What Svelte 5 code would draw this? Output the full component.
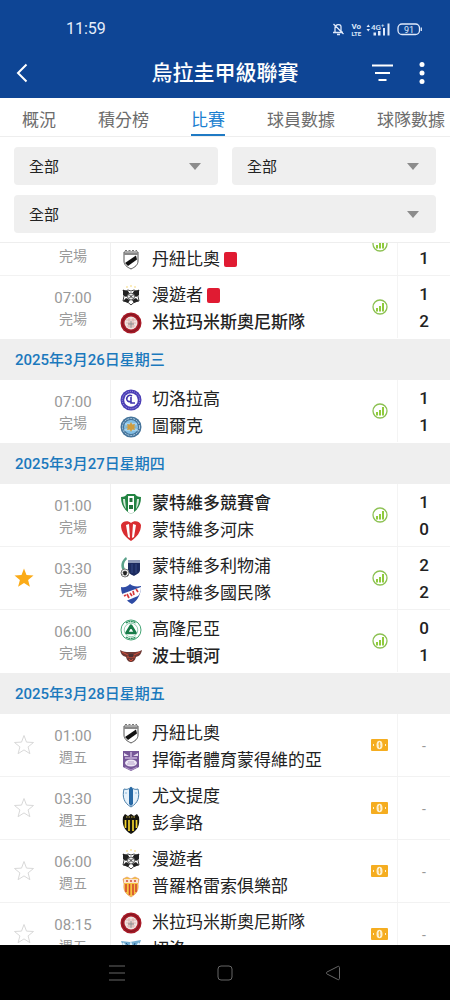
<script lang="ts">
  import { onMount } from 'svelte';

  type Team = { crest: string; name: string; score?: number; bold?: boolean; redCard?: boolean };
  type Match = { time: string; note: string; star: 'none' | 'off' | 'on'; teams: (Team | null)[] };
  type Day = { date: string; matches: Match[] };

  const tabs = ['概況', '積分榜', '比賽', '球員數據', '球隊數據'];
  const filters = ['stage', 'round', 'team'];

  let active = $state('比賽');
  let list: HTMLElement;

  let days = $state<Day[]>([
    {
      date: '',
      matches: [
        { time: '', note: '完場', star: 'none', teams: [null, { crest: 'danubio', name: '丹紐比奧', score: 1, redCard: true }] },
        {
          time: '07:00', note: '完場', star: 'none',
          teams: [
            { crest: 'wanderers', name: '漫遊者', score: 1, redCard: true },
            { crest: 'miramar', name: '米拉玛米斯奧尼斯隊', score: 2, bold: true }
          ]
        }
      ]
    },
    {
      date: '2025年3月26日星期三',
      matches: [
        {
          time: '07:00', note: '完場', star: 'none',
          teams: [
            { crest: 'cerrolargo', name: '切洛拉高', score: 1 },
            { crest: 'torque', name: '圖爾克', score: 1 }
          ]
        }
      ]
    },
    {
      date: '2025年3月27日星期四',
      matches: [
        {
          time: '01:00', note: '完場', star: 'none',
          teams: [
            { crest: 'racing', name: '蒙特維多競賽會', score: 1, bold: true },
            { crest: 'river', name: '蒙特維多河床', score: 0 }
          ]
        },
        {
          time: '03:30', note: '完場', star: 'on',
          teams: [
            { crest: 'liverpool', name: '蒙特維多利物浦', score: 2 },
            { crest: 'nacional', name: '蒙特維多國民隊', score: 2 }
          ]
        },
        {
          time: '06:00', note: '完場', star: 'none',
          teams: [
            { crest: 'colonia', name: '高隆尼亞', score: 0 },
            { crest: 'boston', name: '波士頓河', score: 1, bold: true }
          ]
        }
      ]
    },
    {
      date: '2025年3月28日星期五',
      matches: [
        {
          time: '01:00', note: '週五', star: 'off',
          teams: [
            { crest: 'danubio', name: '丹紐比奧' },
            { crest: 'defensor', name: '捍衛者體育蒙得維的亞' }
          ]
        },
        {
          time: '03:30', note: '週五', star: 'off',
          teams: [
            { crest: 'juventud', name: '尤文提度' },
            { crest: 'penarol', name: '彭拿路' }
          ]
        },
        {
          time: '06:00', note: '週五', star: 'off',
          teams: [
            { crest: 'wanderers', name: '漫遊者' },
            { crest: 'progreso', name: '普羅格雷索俱樂部' }
          ]
        },
        {
          time: '08:15', note: '週五', star: 'off',
          teams: [
            { crest: 'miramar', name: '米拉玛米斯奧尼斯隊' },
            { crest: 'cerro', name: '切洛' }
          ]
        }
      ]
    }
  ]);

  const finished = (match: Match) => match.note === '完場';

  function toggleStar(match: Match) {
    match.star = match.star === 'on' ? 'off' : 'on';
  }

  onMount(() => {
    list.scrollTop = 30;
  });
</script>

{#snippet crest(kind: string)}
  <svg class="crest" viewBox="0 0 22 22" aria-hidden="true">
    {#if kind === 'danubio'}
      <path d="M4 3v9c0 4 3 6 7 8 4-2 7-4 7-8V3z" fill="#fff" stroke="#555" />
      <path d="M4 4h14v2H4z" fill="#888" />
      <path d="M5 1.500h12" stroke="#777" stroke-dasharray="2 1.500" />
      <path d="m5 14 11-7.500 1 4L8 17z" fill="#111" />
    {:else if kind === 'wanderers'}
      <path d="M3 5c2 1 3 1 5 0l3 1 3-1c2 1 3 1 5 0-1 3-2 4-1 6l1 5c-3 0-5 1-8 4-3-3-5-4-8-4l1-5c1-2 0-3-1-6z" fill="#fff" stroke="#444" />
      <path d="m3 5 5 1 2 3-4 3-3-2zM19 5l-5 1-2 3 4 3 3-2zM3 16l3-3 4 2-2 3zM19 16l-3-3-4 2 2 3z" fill="#222" />
      <circle cx="11" cy="11.500" r="3.500" fill="#eee" stroke="#555" />
      <path d="m9 9.500 4 4m0-4-4 4" stroke="#333" />
      <circle cx="7" cy="2" r=".7" fill="#f2c94c" /><circle cx="11" cy="1" r=".7" fill="#f2c94c" /><circle cx="15" cy="2" r=".7" fill="#f2c94c" />
    {:else if kind === 'miramar'}
      <circle cx="11" cy="11" r="10.500" fill="#a81b28" />
      <circle cx="11" cy="11" r="8.500" fill="none" stroke="#7c1520" />
      <circle cx="11" cy="11" r="6.500" fill="#efe3e0" />
      <path d="M6 8h10M6 11h10M7 14h8M9 6v10M13 6v10" stroke="#d4a5a1" stroke-width=".7" />
      <path d="M11 9v7M8 12h6" stroke="#888" />
    {:else if kind === 'cerrolargo'}
      <circle cx="11" cy="11" r="10.500" fill="#4a3db5" />
      <circle cx="11" cy="11" r="8.700" fill="none" stroke="#aaa3e6" stroke-dasharray="1 1.200" />
      <circle cx="11" cy="11" r="6.800" fill="#fff" />
      <path d="M12 7c-3-2-6 1-5 4 1 2 3 2 4 1M11 8v6h4" fill="none" stroke="#4035ad" stroke-width="1.600" />
    {:else if kind === 'torque'}
      <circle cx="11" cy="11" r="10.500" fill="#45749b" />
      <circle cx="11" cy="11" r="8.500" fill="none" stroke="#b6d4e8" stroke-dasharray="2 1" />
      <circle cx="11" cy="11" r="7" fill="#83bfe5" />
      <path d="M5 8h12M4 14h14" stroke="#c6e3f4" />
      <path d="m11 6 1.300 2.600L15 8l-.8 2.400L17 11l-2.800.8L15 14l-2.700-.6L11 16l-1.300-2.600L7 14l.8-2.200L5 11l2.800-.6L7 8l2.700.6z" fill="#cf9c3d" />
    {:else if kind === 'racing'}
      <path d="M1 4c3 0 5-1 6-3h8c1 2 3 3 6 3 0 8-3 13-10 17C4 17 1 12 1 4z" fill="#238443" />
      <path d="M3 6h2l1 10C4 13 3 10 3 6zM19 6h-2l-1 10c2-3 3-6 3-10z" fill="#d6eadb" />
      <path d="M8 3h6v16l-3 2-3-2z" fill="#fff" />
      <path d="M9.500 5h3v4h-3zM9 12h4v4H9z" fill="#23743d" />
    {:else if kind === 'river'}
      <path d="M1 5c1-4 7-5 10-2 3-3 9-2 10 2 0 7-4 12-10 16C5 17 1 12 1 5z" fill="#d92d31" />
      <path d="m6 5 3-1 1 14-2-1zM16 5l-3-1-1 14 2-1z" fill="#fff" />
    {:else if kind === 'liverpool'}
      <path d="M6 1C1 5 0 10 3 15l2-2C3 9 4 6 7 3z" fill="#5aa18a" />
      <path d="M8 4h12v10c0 3-3 4-6 6-4-2-6-3-6-6z" fill="#1c2b5f" />
      <path d="M8 4h12v3H8z" fill="#8f9bb8" />
      <path d="M12 8v9M16 8v9" stroke="#344a86" />
      <circle cx="5" cy="17" r="4" fill="#eee" stroke="#777" />
      <path d="m5 15 2 1-1 3H4l-1-3zM1.500 18l1 1M8 19l-1 1" fill="#222" stroke="#222" stroke-width=".6" />
    {:else if kind === 'nacional'}
      <path d="M1 4c4 1 7-1 9-3 2 2 6 3 11 2 0 8-3 14-9 18C5 17 1 12 1 4z" fill="#2e4ba4" />
      <path d="m2 11 19-7c0 4-1 7-3 9L6 18c-2-2-3-4-4-7z" fill="#fff" />
      <path d="m4 13 2-1m1-1 2 4m1-5 2 3m1-5 1 4m2-6 2 3" stroke="#d5393d" stroke-width="1.700" />
    {:else if kind === 'colonia'}
      <circle cx="11" cy="11" r="10" fill="#fff" stroke="#45a575" />
      <path d="M6 4c3-2 7-2 10 0M6 18c3 2 7 2 10 0" fill="none" stroke="#2c9460" stroke-width="1.500" stroke-dasharray="2 .5" />
      <circle cx="11" cy="11" r="6.800" fill="none" stroke="#6cba92" stroke-width=".7" />
      <path d="M11 6.500 15.500 14h-9z" fill="none" stroke="#187b48" stroke-width="2.600" stroke-linejoin="round" />
    {:else if kind === 'boston'}
      <path d="M0 4c4 2 6 2 9 2h4c3 0 5 0 9-2-1 5-3 6-6 7-1 4-3 5-5 5s-4-1-5-5C3 10 1 9 0 4z" fill="#6f3a35" />
      <path d="m2 6 6 3M20 6l-6 3M7 11h8M9 13l2 2 2-2" stroke="#d34d39" fill="none" />
      <path d="M9 8h4v3H9z" fill="#493234" />
    {:else if kind === 'defensor'}
      <path d="M3 1h16v16l-8 4-8-4z" fill="#765798" />
      <path d="m4 3 5 3H4zM18 3l-5 3h5z" fill="#e8dff0" />
      <path d="M11 2v5M5 8h12" stroke="#c8b3da" stroke-width="1.500" />
      <ellipse cx="11" cy="13" rx="6" ry="3.500" fill="#eee8f5" />
      <path d="M7 14h8M8 12h6" stroke="#b9a4cd" />
      <path d="m5 17 6 3 6-3" fill="none" stroke="#b69aca" />
    {:else if kind === 'juventud'}
      <path d="M4 3c3 1 5 0 7-2 2 2 4 3 7 2 2 8 0 14-7 18C4 17 2 11 4 3z" fill="#e6f1fa" stroke="#477da9" />
      <path d="m9 3 2-2 2 2v15l-2 2-2-2z" fill="#2769a5" />
      <path d="M5 7h2M15 7h2" stroke="#8ab8dc" />
    {:else if kind === 'penarol'}
      <path d="m3 4 2-3 3 2 3-2 3 2 3-2 2 3c1 8-1 13-8 17C4 17 2 12 3 4z" fill="#16150f" />
      <path d="M5.500 7v8M9 7v11M13 7v11M16.500 7v8" stroke="#f1d22d" stroke-width="1.700" />
      <path d="M6 4h10" stroke="#cbb443" stroke-dasharray="1.500 1" />
    {:else if kind === 'progreso'}
      <path d="M3 3 7 1l4 2 4-2 4 2-1 5c1 7-2 10-7 13C6 18 3 15 4 8z" fill="#f6c441" stroke="#e08a5a" stroke-width=".6" />
      <path d="M4 3h14v4H4z" fill="#fbe3cf" />
      <path d="M6 5h2m2 0h2m2 0h2" stroke="#d34b36" stroke-width="1.500" />
      <path d="M6 8v8M9.500 8v11M13 8v11M16 8v8" stroke="#d1402e" stroke-width="1.500" />
    {:else}
      <path d="m1 2 9 1 11-2-3 8c-1 5-3 9-7 12-4-3-6-7-7-11z" fill="#72aed3" />
      <path d="m3 4 6 9 2-8 3 8 5-9" fill="none" stroke="#e4f2fa" stroke-width="2" />
      <path d="m6 4 4 5M15 4l-2 5M8 16h6" stroke="#285d91" />
    {/if}
  </svg>
{/snippet}

<div class="screen">
  <header>
    <div class="status-bar">
      <span class="clock">11:59</span>
      <svg class="status-icons" viewBox="0 0 90 16" aria-hidden="true">
        <g fill="none" stroke="#dfe9fa" stroke-width="1.300">
          <path d="M1 11.500h10M3 11V7c0-4 5.500-4.500 6-1.500v4.500l1.500 1.500M5 13.500h3M1.500 3l10 10" />
          <rect x="66" y="3" width="21.500" height="10.500" rx="4" />
          <path d="M89.300 6.500v3.500" />
        </g>
        <g fill="#dfe9fa">
          <text x="19.500" y="8" font-size="8" font-weight="700">Vo</text>
          <text x="19.500" y="14.500" font-size="6" font-weight="700">LTE</text>
          <path d="M34.500 6h3.500l-1.700-2.500zM34.500 8h3.500l-1.700 2.500z" />
          <text x="39" y="8.500" font-size="8" font-weight="500">4G⁺</text>
          <path d="M41.500 11.500h2.500v3h-2.500zM46 10h2.500v4.500H46zM51 7h2v7.500h-2zM55.500 2.500h2v12h-2z" />
          <text x="72" y="11.500" font-size="9">91</text>
        </g>
      </svg>
    </div>
    <div class="title-bar">
      <button type="button" aria-label="返回">
        <svg width="22" height="22" viewBox="0 0 22 22"><path d="M14.500 2.500 6 11l8.500 8.500" /></svg>
      </button>
      <h1>烏拉圭甲級聯賽</h1>
      <button type="button" class="sort" aria-label="排序">
        <svg width="22" height="22" viewBox="0 0 22 22"><path d="M0 3.500h21M3 11h15M6.500 18h8" /></svg>
      </button>
      <button type="button" aria-label="更多">
        <svg width="6" height="22" viewBox="0 0 6 22">
          <g class="dots"><circle cx="3" cy="2.500" r="2.500" /><circle cx="3" cy="11" r="2.500" /><circle cx="3" cy="19.500" r="2.500" /></g>
        </svg>
      </button>
    </div>
  </header>

  <nav class="tabs">
    {#each tabs as tab}
      <button type="button" class:active={tab === active} onclick={() => (active = tab)}>{tab}</button>
    {/each}
  </nav>

  <div class="filters">
    {#each filters as filter}
      <label class={filter}>
        <select aria-label={filter}>
          <option>全部</option>
        </select>
      </label>
    {/each}
  </div>

  <main bind:this={list}>
    {#each days as day}
      {#if day.date}
        <h2>{day.date}</h2>
      {/if}
      {#each day.matches as match}
        <article>
          <div class="fav">
            {#if match.star !== 'none'}
              <button type="button" class:on={match.star === 'on'} aria-label="收藏" onclick={() => toggleStar(match)}>
                <svg width="22" height="22" viewBox="0 0 22 22">
                  <path d="m11 1.500 2.500 6.600 7 .4-5.400 4.400 1.800 6.800-5.900-3.800-5.900 3.800 1.800-6.800L1.500 8.500l7-.4z" />
                </svg>
              </button>
            {/if}
          </div>
          <div class="when">
            <time>{match.time}</time>
            <span>{match.note}</span>
          </div>
          <div class="teams">
            {#each match.teams as team}
              <div class="side" class:bold={team?.bold}>
                {#if team}
                  {@render crest(team.crest)}
                  <span class="name">{team.name}</span>
                  {#if team.redCard}<i class="red-card"></i>{/if}
                {/if}
              </div>
            {/each}
          </div>
          <div class="extra">
            {#if finished(match)}
              <svg width="16" height="16" viewBox="0 0 16 16" aria-hidden="true">
                <circle cx="8" cy="8" r="7" fill="none" stroke="#8cc152" stroke-width="1.300" />
                <path d="M4 9h2v3.500H4zM7 7h2v5.500H7zM10 4h2v8.500h-2z" fill="#8fcb3c" />
              </svg>
            {:else}
              <svg width="18" height="14" viewBox="0 0 18 14" aria-hidden="true">
                <rect y="1" width="17" height="12" rx="1" fill="#f5ad20" />
                <ellipse cx="8.500" cy="7" rx="3" ry="4.300" fill="#fff1cf" />
                <path d="M8.500 4v6M7 6h2.500M7.500 8H10" stroke="#f5ad20" stroke-width=".8" />
                <path d="M2 6h1v2H2zM14 6h1v2h-1z" fill="#fff1cf" />
              </svg>
            {/if}
          </div>
          <div class="scores">
            {#if finished(match)}
              {#each match.teams as team}
                <span>{team?.score ?? ''}</span>
              {/each}
            {:else}
              <span class="pending">-</span>
            {/if}
          </div>
        </article>
      {/each}
    {/each}
  </main>

  <footer>
    <button type="button" aria-label="選單">
      <svg width="18" height="18" viewBox="0 0 18 18"><path d="M1 2h16M1 9h16M1 16h16" /></svg>
    </button>
    <button type="button" aria-label="主畫面">
      <svg width="18" height="18" viewBox="0 0 18 18"><rect x="2" y="2" width="14" height="14" rx="3" /></svg>
    </button>
    <button type="button" aria-label="上一頁">
      <svg width="18" height="18" viewBox="0 0 18 18"><path d="M15.500 3.500v11c0 1-.8 1.500-1.700 1L3 10c-.9-.5-.9-1.500 0-2l10.800-5.500c.9-.5 1.700 0 1.700 1z" /></svg>
    </button>
  </footer>
</div>

<style>
  :global(body) {
    margin: 0;
  }

  .screen {
    background: #fff;
    color: #222;
    display: flex;
    flex-direction: column;
    font-family: Roboto, 'Noto Sans CJK TC', sans-serif;
    height: 100vh;
    overflow: hidden;
  }

  button {
    background: none;
    border: 0;
    color: inherit;
    cursor: pointer;
    font: inherit;
    padding: 0;
  }

  svg {
    display: block;
    flex: none;
  }

  header {
    background: #0e4595;
    color: #fff;
  }

  .status-bar {
    align-items: center;
    box-sizing: border-box;
    display: flex;
    height: 48px;
    justify-content: space-between;
    padding: 9px 28px 0 66px;
  }

  .clock {
    color: #e6eefb;
    font-size: 16px;
    line-height: 20px;
  }

  .status-icons {
    height: 16px;
    width: 90px;
  }

  .title-bar {
    align-items: center;
    display: grid;
    grid-template-columns: 78px 1fr 22px 56px;
    height: 50px;
  }

  .title-bar button {
    display: flex;
    justify-content: center;
  }

  .title-bar button:first-child {
    justify-content: flex-start;
    padding-left: 12px;
  }

  .title-bar path {
    fill: none;
    stroke: #fff;
    stroke-width: 2;
  }

  .dots {
    fill: #fff;
  }

  h1 {
    font-size: 21px;
    font-weight: 500;
    line-height: 30px;
    margin: 0;
    text-align: center;
  }

  .tabs {
    border-bottom: 1px solid #eee;
    display: flex;
    flex: none;
    gap: 42px;
    height: 38px;
    overflow: hidden;
    padding-left: 22px;
  }

  .tabs button {
    border-bottom: 2px solid transparent;
    color: #6c6c6c;
    flex: none;
    font-size: 17px;
    padding-top: 4px;
  }

  .tabs .active {
    border-color: #1f7ac4;
    color: #1a7fd0;
  }

  .filters {
    border-bottom: 1px solid #eee;
    display: grid;
    gap: 10px 14px;
    grid-template-columns: 1fr 1fr;
    padding: 10px 14px 9px;
  }

  .filters label {
    position: relative;
  }

  .filters .team {
    grid-column: span 2;
  }

  .filters label::after {
    border: 6px solid transparent;
    border-bottom: 0;
    border-top: 7px solid #8c8c8c;
    content: '';
    pointer-events: none;
    position: absolute;
    right: 17px;
    top: 16px;
  }

  select {
    appearance: none;
    background: #efefef;
    border: 0;
    border-radius: 4px;
    color: #222;
    display: block;
    font-family: inherit;
    font-size: 15px;
    height: 38px;
    padding: 2px 15px 0;
    width: 100%;
  }

  main {
    flex: 1;
    min-height: 0;
    overflow-y: auto;
    scrollbar-width: none;
  }

  h2 {
    background: #efefef;
    color: #1b79bd;
    font-size: 15px;
    font-weight: 500;
    line-height: 39px;
    margin: 0;
    padding: 2px 15px 0;
  }

  article {
    border-bottom: 1px solid #f2f2f2;
    box-sizing: border-box;
    display: grid;
    grid-template-columns: 36px 74px 1fr 34px 53px;
    height: 63px;
  }

  article:has(+ h2) {
    border-color: transparent;
  }

  .fav {
    align-items: center;
    display: flex;
    padding-left: 13px;
  }

  .fav path {
    fill: none;
    stroke: #d9d9d9;
  }

  .fav .on path {
    fill: #fbab18;
    stroke: none;
  }

  .when {
    color: #999;
    display: flex;
    flex-direction: column;
    font-size: 14px;
    justify-content: center;
    line-height: 21px;
    padding-top: 4px;
    text-align: center;
  }

  .when time {
    font-size: 15px;
    height: 21px;
  }

  .teams {
    border-left: 1px solid #f0f0f0;
    padding: 6px 0 0 9px;
  }

  .side {
    align-items: center;
    display: flex;
    height: 27px;
  }

  .crest {
    height: 22px;
    margin-right: 10px;
    width: 22px;
  }

  .name {
    font-size: 17px;
    line-height: 27px;
    white-space: nowrap;
  }

  .bold {
    font-weight: 500;
  }

  .red-card {
    background: #e01b32;
    border-radius: 2px;
    height: 15px;
    margin-left: 4px;
    width: 13px;
  }

  .extra {
    align-items: center;
    display: flex;
    justify-content: center;
  }

  .scores {
    border-left: 1px solid #f4f4f4;
    display: flex;
    flex-direction: column;
    font-size: 17px;
    font-weight: 500;
    justify-content: center;
    line-height: 27px;
    padding-top: 2px;
    text-align: center;
  }

  .scores span {
    height: 27px;
  }

  .scores .pending {
    color: #999;
    font-size: 14px;
    font-weight: 400;
  }

  footer {
    align-items: center;
    background: #000;
    display: flex;
    flex: none;
    gap: 90px;
    height: 55px;
    justify-content: center;
  }

  footer svg {
    fill: none;
    stroke: #666;
  }
</style>
